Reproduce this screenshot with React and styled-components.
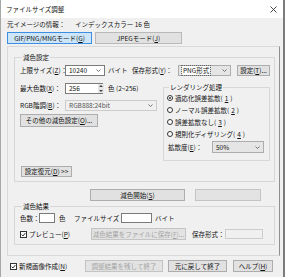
import styled, { createGlobalStyle } from 'styled-components'

const GlobalStyle = createGlobalStyle`
  html, body { margin: 0; padding: 0; background: #f0f0f0; }
  body {
    font-family: "Noto Sans CJK JP", "Noto Sans", sans-serif;
    font-size: 6.5px;
    line-height: 1;
    color: #111;
  }
`

const Window = styled.div`
  width: 285px;
  height: 277px;
  box-sizing: border-box;
  background: #f0f0f0;
  border-left: 1px solid #a8a8a8;
  border-right: 2px solid #7c7c7c;
  display: flex;
  flex-direction: column;
`

const TitleBar = styled.div`
  height: 18px;
  flex: none;
  background: #fff;
  display: flex;
  align-items: center;
  justify-content: space-between;
  padding: 0 6px 0 5px;
`

const Body = styled.div`
  display: flex;
  flex-direction: column;
  padding: 0 3px 0 6px;
`

const InfoRow = styled.div`
  height: 12px;
  display: flex;
  align-items: center;
`

const Cell = styled.span`
  flex: none;
  width: ${p => (p.$w ? `${p.$w}px` : 'auto')};
  margin-left: ${p => p.$ml || 0}px;
  color: ${p => (p.$disabled ? '#a0a0a0' : 'inherit')};
  white-space: nowrap;
`

const TabRow = styled.div`
  margin-top: 2px;
  height: 12px;
  display: flex;
  gap: 3px;
`

const Tab = styled.div`
  width: ${p => p.$w}px;
  box-sizing: border-box;
  border: 1px solid ${p => (p.$active ? '#3d8ee0' : '#b9b9b9')};
  background: ${p => (p.$active ? '#cde5f8' : '#e1e1e1')};
  display: flex;
  align-items: center;
  justify-content: center;
`

const Panel = styled.div`
  margin-top: 2px;
  height: 210px;
  box-sizing: border-box;
  border: 1px solid #d9d9d9;
  border-right-color: #8f8f8f;
  background: #f0f0f0;
  padding: 6px 4px 0 6px;
  display: flex;
  flex-direction: column;
`

const Group = styled.fieldset`
  margin: ${p => p.$mt || 0}px 0 0 0;
  padding: ${p => p.$pad};
  border: 1px solid #d7d7d7;
  min-width: 0;
  box-sizing: border-box;
  width: ${p => (p.$w ? `${p.$w}px` : 'auto')};
  align-self: ${p => p.$self || 'stretch'};
  display: flex;
  flex-direction: column;
`

const Legend = styled.legend`
  padding: 0 1px;
  margin-left: 2px;
  height: 8px;
  line-height: 8px;
`

const Row = styled.div`
  display: flex;
  align-items: center;
  height: ${p => p.$h || 11}px;
  margin-top: ${p => p.$mt || 0}px;
`

const Columns = styled.div`
  display: flex;
  margin-top: 7px;
`

const LeftCol = styled.div`
  width: 143px;
  flex: none;
  display: flex;
  flex-direction: column;
`

const Field = styled.div`
  flex: none;
  width: ${p => p.$w}px;
  height: ${p => p.$h || 11}px;
  margin-left: ${p => p.$ml || 0}px;
  box-sizing: border-box;
  border: 1px solid ${p => (p.$disabled ? '#cccccc' : '#7a7a7a')};
  background: ${p => (p.$disabled ? '#f0f0f0' : '#fff')};
  display: flex;
  align-items: center;
  padding-left: 3px;
`

const Combo = styled.div`
  flex: none;
  width: ${p => p.$w}px;
  height: ${p => p.$h || 11}px;
  margin-left: ${p => p.$ml || 0}px;
  box-sizing: border-box;
  border: 1px solid ${p => (p.$list ? '#adadad' : p.$disabled ? '#cccccc' : '#7a7a7a')};
  background: ${p => (p.$list ? '#e5e5e5' : p.$disabled ? '#f0f0f0' : '#fff')};
  color: ${p => (p.$disabled ? '#555' : 'inherit')};
  display: flex;
  align-items: center;
  justify-content: space-between;
  padding: 0 3px;
`

const ComboText = styled.span`
  padding: 1px 1px;
  background: ${p => (p.$focus ? '#fff' : 'transparent')};
  outline: ${p => (p.$focus ? '1px dotted #666' : 'none')};
`

const Spinner = styled.div`
  width: 6px;
  height: 9px;
  margin-right: -2px;
  display: flex;
  flex-direction: column;
  justify-content: space-around;
  align-items: center;
  background: #e6e6e6;
`

const Button = styled.div`
  flex: none;
  width: ${p => p.$w}px;
  height: ${p => p.$h || 12}px;
  margin-left: ${p => p.$ml || 0}px;
  margin-top: ${p => p.$mt || 0}px;
  box-sizing: border-box;
  border: 1px solid ${p => (p.$disabled ? '#c4c4c4' : '#adadad')};
  background: ${p => (p.$disabled ? '#e3e3e3' : '#e1e1e1')};
  color: ${p => (p.$disabled ? '#a3a3a3' : 'inherit')};
  display: flex;
  align-items: center;
  justify-content: center;
  white-space: nowrap;
`

const RadioRow = styled.div`
  display: flex;
  align-items: center;
  height: 12px;
  gap: 2px;
`

const Radio = styled.span`
  width: 6px;
  height: 6px;
  box-sizing: border-box;
  border-radius: 50%;
  border: 1px solid #333;
  background: #fff;
  display: flex;
  align-items: center;
  justify-content: center;
  &::after {
    content: '';
    width: 2px;
    height: 2px;
    border-radius: 50%;
    background: ${p => (p.$on ? '#333' : 'transparent')};
  }
`

const Check = styled.span`
  flex: none;
  width: 7px;
  height: 7px;
  box-sizing: border-box;
  border: 1px solid #333;
  background: #fff;
  margin-left: ${p => p.$ml || 0}px;
  margin-right: 2px;
  display: flex;
  align-items: center;
  justify-content: center;
`

const BottomRow = styled.div`
  margin-top: 4px;
  height: 12px;
  display: flex;
  align-items: center;
`

const Arrow = () => (
  <svg width="5" height="3" viewBox="0 0 5 3">
    <polyline points="0.5,0.5 2.5,2.5 4.5,0.5" fill="none" stroke="#555" strokeWidth="0.8" />
  </svg>
)

const Tick = () => (
  <svg width="5" height="5" viewBox="0 0 5 5">
    <polyline points="0.6,2.6 2,4 4.4,1" fill="none" stroke="#222" strokeWidth="0.9" />
  </svg>
)

const Tri = ({ up }) => (
  <svg width="4" height="2" viewBox="0 0 4 2">
    <polygon points={up ? '0,2 2,0 4,2' : '0,0 2,2 4,0'} fill="#444" />
  </svg>
)

const Key = ({ k }) => (
  <>(<u>{k}</u>)</>
)

export default function App() {
  return (
    <>
      <GlobalStyle />
      <Window>
        <TitleBar>
          <span>ファイルサイズ調整</span>
          <svg width="7" height="7" viewBox="0 0 7 7">
            <path d="M0.5 0.5 L6.5 6.5 M6.5 0.5 L0.5 6.5" stroke="#333" strokeWidth="0.9" />
          </svg>
        </TitleBar>
        <Body>
          <InfoRow>
            <Cell $w={68}>元イメージの情報：</Cell>
            <Cell>インデックスカラー 16 色</Cell>
          </InfoRow>
          <TabRow>
            <Tab $w={85} $active>GIF/PNG/MNGモード<Key k="G" /></Tab>
            <Tab $w={87}>JPEGモード<Key k="J" /></Tab>
          </TabRow>
          <Panel>
            <Group $pad="4px 4px 4px 5px">
              <Legend>減色設定</Legend>
              <Row>
                <Cell $w={45}>上限サイズ<Key k="Z" />：</Cell>
                <Combo $w={40}>10240<Arrow /></Combo>
                <Cell $w={24} $ml={3}>バイト</Cell>
                <Cell $w={46}>保存形式<Key k="Y" />：</Cell>
                <Combo $w={53} $list><ComboText $focus>PNG形式</ComboText><Arrow /></Combo>
                <Button $w={33} $h={11} $ml={6}>設定<Key k="T" />...</Button>
              </Row>
              <Columns>
                <LeftCol>
                  <Row>
                    <Cell $w={45}>最大色数<Key k="X" />：</Cell>
                    <Field $w={38}>
                      <span style={{ flex: 1 }}>256</span>
                      <Spinner><Tri up /><Tri /></Spinner>
                    </Field>
                    <Cell $ml={5}>色 (2~256)</Cell>
                  </Row>
                  <Row $mt={6}>
                    <Cell $w={45}>RGB階調<Key k="B" />：</Cell>
                    <Combo $w={92} $disabled>RGB888:24bit<Arrow /></Combo>
                  </Row>
                  <Button $w={78} $h={13} $mt={3}>その他の減色設定<Key k="O" />...</Button>
                  <Button $w={51} $h={11} $mt={39} $ml={1}>設定復元<Key k="D" /> &gt;&gt;</Button>
                </LeftCol>
                <Group $w={109} $self="flex-start" $pad="1px 3px 7px 3px">
                  <Legend>レンダリング処理</Legend>
                  <RadioRow><Radio $on />適応化誤差拡散<Key k="1" /></RadioRow>
                  <RadioRow><Radio />ノーマル誤差拡散<Key k="2" /></RadioRow>
                  <RadioRow><Radio />誤差拡散なし<Key k="3" /></RadioRow>
                  <RadioRow><Radio />規則化ディザリング<Key k="4" /></RadioRow>
                  <Row $h={12} $mt={1}>
                    <Cell $w={44} $ml={1}>拡散度<Key k="E" />：</Cell>
                    <Combo $w={52} $h={12} $list>50%<Arrow /></Combo>
                  </Row>
                </Group>
              </Columns>
            </Group>
            <Row $h={12} $mt={7}>
              <Button $w={95} $ml={76}>減色開始<Key k="S" /></Button>
              <Button $w={66} $ml={10} $disabled />
            </Row>
            <Group $mt={1} $pad="3px 4px 4px 5px">
              <Legend>減色結果</Legend>
              <Row $h={10}>
                <Cell $w={19}>色数：</Cell>
                <Field $w={16} $h={10} />
                <Cell $w={15} $ml={4}>色</Cell>
                <Cell $w={47}>ファイルサイズ：</Cell>
                <Field $w={31} $h={10} />
                <Cell $ml={3}>バイト</Cell>
              </Row>
              <Row $h={12} $mt={5}>
                <Check><Tick /></Check>
                <Cell $w={62}>プレビュー<Key k="P" /></Cell>
                <Button $w={95} $disabled>減色結果をファイルに保存<Key k="F" />...</Button>
                <Cell $w={33} $ml={6}>保存形式：</Cell>
                <Field $w={38} $h={10} $disabled />
              </Row>
            </Group>
          </Panel>
          <BottomRow>
            <Check $ml={3}><Tick /></Check>
            <Cell $w={66}>新規画像作成<Key k="N" /></Cell>
            <Button $w={78} $disabled>調整結果を残して終了</Button>
            <Button $w={59} $ml={5}>元に戻して終了</Button>
            <Button $w={40} $ml={6}>ヘルプ<Key k="H" /></Button>
          </BottomRow>
        </Body>
      </Window>
    </>
  )
}
